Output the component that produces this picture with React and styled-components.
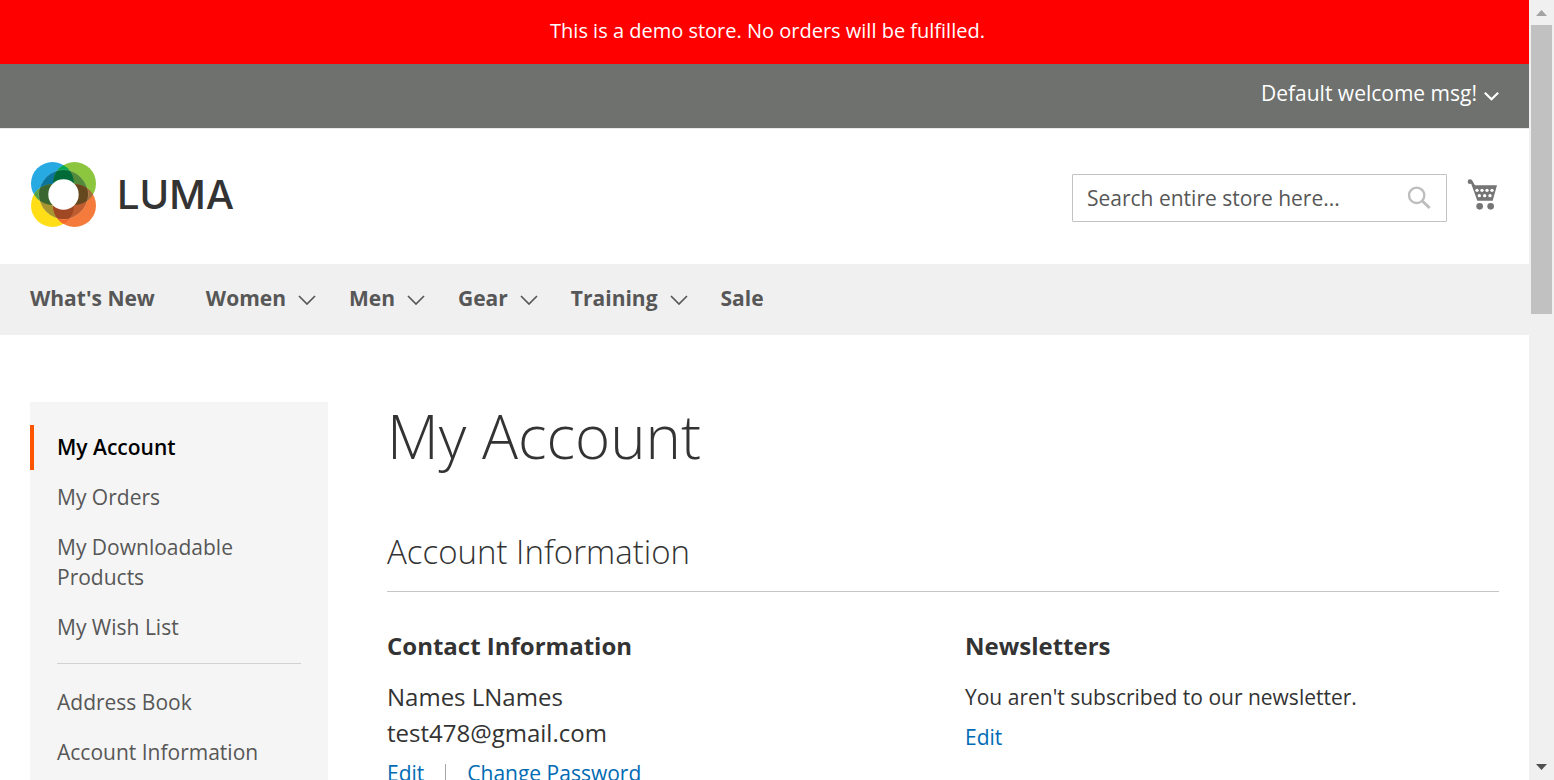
import React from "react";
import styled, { createGlobalStyle, css } from "styled-components";

const GlobalStyle = createGlobalStyle`
  *, *::before, *::after { box-sizing: border-box; }
  body {
    margin: 0;
    background: #fff;
    color: #333;
    font-family: "Open Sans", "Noto Sans", sans-serif;
    font-size: 21px;
    line-height: 30px;
  }
  h1, h2, h3, p, ul { margin: 0; padding: 0; }
  ul { list-style: none; }
  a { color: #006bb4; text-decoration: none; }
  button, input { font: inherit; color: inherit; }
`;

const Shell = styled.div`
  display: flex;
  height: 100vh;
`;

const Page = styled.div`
  flex: 1;
  min-width: 0;
  overflow: hidden auto;
  scrollbar-width: none;
`;

const ScrollRail = styled.div`
  display: flex;
  flex-direction: column;
  align-items: center;
  width: 25px;
  background: #f0f0f0;
`;

const ScrollArrow = styled.svg`
  display: block;
  width: 25px;
  height: 25px;
  fill: ${(p) => p.$color};
`;

const ScrollTrack = styled.div`
  flex: 1;
  width: 21px;
`;

const ScrollThumb = styled.div`
  height: 289px;
  background: #c1c1c1;
`;

const Notice = styled.p`
  padding: 16px 24px 18px 30px;
  background: #f00;
  color: #fff;
  font-size: 20px;
  text-align: center;
`;

const Panel = styled.div`
  display: flex;
  justify-content: flex-end;
  height: 64px;
  padding: 14px 30px 0;
  background: #6e716e;
  color: #fff;
`;

const WelcomeButton = styled.button`
  display: flex;
  align-items: center;
  gap: 7px;
  height: 30px;
  padding: 0;
  border: 0;
  background: none;
  color: #fff;
`;

const Chevron = styled.svg`
  flex: none;
  width: ${(p) => p.$size}px;
  height: 10px;
  margin-top: ${(p) => p.$drop}px;
  fill: none;
  stroke: currentColor;
  stroke-width: ${(p) => p.$weight};
`;

const Header = styled.header`
  display: flex;
  align-items: flex-start;
  height: 136px;
  padding: 33px 30px 0;
  border-top: 1px solid #e8e8e8;
`;

const Logo = styled.a`
  display: flex;
  align-items: center;
  gap: 20px;
  margin-right: auto;
  color: #333;
`;

const LogoMark = styled.svg`
  display: block;
  width: 67px;
  height: 66px;
`;

const LogoWord = styled.span`
  font-family: Inter, "Open Sans", sans-serif;
  font-size: 40px;
  font-weight: 500;
  line-height: 64px;
`;

const SearchForm = styled.form`
  display: flex;
  align-items: center;
  width: 375px;
  height: 48px;
  margin: 12px 20px 0 0;
  border: 1px solid #c2c2c2;
  border-radius: 1px;
`;

const SearchInput = styled.input`
  flex: 1;
  min-width: 0;
  height: 46px;
  padding: 0 14px;
  border: 0;
  outline: 0;
  background: none;
  &::placeholder { color: #575757; opacity: 1; }
`;

const SearchButton = styled.button`
  padding: 0 15px 0 0;
  border: 0;
  background: none;
  color: #bdbdbd;
`;

const SearchIcon = styled.svg`
  display: block;
  width: 24px;
  height: 24px;
`;

const CartLink = styled.a`
  margin-top: 17px;
  color: #757575;
`;

const CartIcon = styled.svg`
  display: block;
  width: 32px;
  height: 32px;
`;

const Nav = styled.nav`
  padding: 0 30px;
  background: #f0f0f0;
`;

const NavList = styled.ul`
  display: flex;
  gap: 33px;
`;

const NavItem = styled.li`
  padding: 19px ${(p) => (p.$plain ? 18 : 0)}px 22px 0;
`;

const NavLink = styled.a`
  display: flex;
  align-items: center;
  gap: 12px;
  color: #575757;
  font-weight: 700;
`;

const Columns = styled.div`
  display: grid;
  grid-template-columns: 298px minmax(0, 1fr);
  gap: 59px;
  align-items: start;
  padding: 67px 30px 60px;
`;

const Sidebar = styled.aside`
  padding: 23px 0;
  background: #f5f5f5;
`;

const SideList = styled.ul`
  display: flex;
  flex-direction: column;
  gap: 5px;
`;

const SideLink = styled.a`
  display: block;
  padding: 7px 40px 8px 27px;
  color: #575757;
  ${(p) =>
    p.$current &&
    css`
      padding-left: 23px;
      border-left: 4px solid #ff5501;
      color: #000;
      font-weight: 600;
    `}
`;

const SideDivider = styled.li`
  height: 1px;
  margin: 8px 27px 11px;
  background: #d1d1d1;
`;

const Title = styled.h1`
  font-size: 60px;
  font-weight: 300;
  line-height: 68px;
`;

const SectionTitle = styled.h2`
  margin-top: 59px;
  padding: 0 0 16px;
  border-bottom: 1px solid #c6c6c6;
  font-size: 33px;
  font-weight: 300;
  line-height: 46px;
`;

const Boxes = styled.div`
  display: grid;
  grid-template-columns: 1fr 1fr;
  gap: 44px;
  padding-top: 36px;
`;

const BoxTitle = styled.h3`
  margin-bottom: 15px;
  font-size: 24px;
  font-weight: 700;
  line-height: 36px;
`;

const BoxText = styled.p`
  font-size: ${(p) => (p.$large ? 24 : 21)}px;
  line-height: 36px;
`;

const BoxActions = styled.div`
  display: flex;
  align-items: center;
  gap: 21px;
  margin-top: 7px;
`;

const ActionRule = styled.span`
  width: 1px;
  height: 18px;
  background: #a6a6a6;
`;

function ChevronIcon({ size = 18, drop = 4, weight = 1.7 }) {
  return (
    <Chevron $size={size} $drop={drop} $weight={weight} viewBox="0 0 18 10" aria-hidden="true">
      <path d="M1 1 L9 9 L17 1" />
    </Chevron>
  );
}

function LumaMark() {
  return (
    <LogoMark viewBox="0 0 67 66" aria-hidden="true">
      <defs>
        <clipPath id="nw"><circle cx="22.5" cy="21.5" r="21.5" /></clipPath>
        <clipPath id="ne"><circle cx="44.5" cy="21.5" r="21.5" /></clipPath>
        <clipPath id="sw"><circle cx="22.5" cy="43.5" r="21.5" /></clipPath>
        <clipPath id="se"><circle cx="44.5" cy="43.5" r="21.5" /></clipPath>
      </defs>
      <circle cx="22.5" cy="21.5" r="21.5" fill="#27a9e1" />
      <circle cx="44.5" cy="21.5" r="21.5" fill="#8cc63f" />
      <circle cx="22.5" cy="43.5" r="21.5" fill="#ffde17" />
      <circle cx="44.5" cy="43.5" r="21.5" fill="#f47b3c" />
      <circle cx="44.5" cy="21.5" r="21.5" fill="#00a651" clipPath="url(#nw)" />
      <circle cx="22.5" cy="43.5" r="21.5" fill="#52a14a" clipPath="url(#nw)" />
      <circle cx="44.5" cy="43.5" r="21.5" fill="#a0703a" clipPath="url(#ne)" />
      <circle cx="44.5" cy="43.5" r="21.5" fill="#f26a2c" clipPath="url(#sw)" />
      <g stroke="#fff" strokeOpacity=".3" strokeWidth=".5">
        <circle cx="33.5" cy="32.5" r="24.5" fill="#0b759c" clipPath="url(#nw)" />
        <circle cx="33.5" cy="32.5" r="24.5" fill="#568a3b" clipPath="url(#ne)" />
        <circle cx="33.5" cy="32.5" r="24.5" fill="#a89430" clipPath="url(#sw)" />
        <circle cx="33.5" cy="32.5" r="24.5" fill="#bf5c30" clipPath="url(#se)" />
      </g>
      <g clipPath="url(#nw)">
        <g clipPath="url(#ne)"><circle cx="33.5" cy="32.5" r="24.5" fill="#006b38" /></g>
        <g clipPath="url(#sw)"><circle cx="33.5" cy="32.5" r="24.5" fill="#3a6730" /></g>
      </g>
      <g clipPath="url(#se)">
        <g clipPath="url(#ne)"><circle cx="33.5" cy="32.5" r="24.5" fill="#66481f" /></g>
        <g clipPath="url(#sw)"><circle cx="33.5" cy="32.5" r="24.5" fill="#a04824" /></g>
      </g>
      <circle cx="33.5" cy="32.5" r="15.2" fill="#fff" />
    </LogoMark>
  );
}

const navItems = [
  { label: "What's New" },
  { label: "Women", menu: true },
  { label: "Men", menu: true },
  { label: "Gear", menu: true },
  { label: "Training", menu: true },
  { label: "Sale" },
];

const sideItems = [
  { label: "My Account", current: true },
  { label: "My Orders" },
  { label: "My Downloadable Products" },
  { label: "My Wish List" },
  { divider: true },
  { label: "Address Book" },
  { label: "Account Information" },
];

export default function App() {
  return (
    <>
      <GlobalStyle />
      <Shell>
        <Page>
          <Notice>This is a demo store. No orders will be fulfilled.</Notice>
          <Panel>
            <WelcomeButton type="button">
              Default welcome msg!
              <ChevronIcon size={15} drop={5} weight={2.6} />
            </WelcomeButton>
          </Panel>
          <Header>
            <Logo href="#">
              <LumaMark />
              <LogoWord>LUMA</LogoWord>
            </Logo>
            <SearchForm role="search">
              <SearchInput type="text" aria-label="Search" placeholder="Search entire store here..." />
              <SearchButton type="submit" aria-label="Submit search">
                <SearchIcon viewBox="0 0 72 72" fill="none" stroke="currentColor" strokeWidth="7">
                  <circle cx="29" cy="28" r="23" />
                  <path d="M46 45 L68 66" strokeWidth="9" />
                </SearchIcon>
              </SearchButton>
            </SearchForm>
            <CartLink href="#" aria-label="My Cart">
              <CartIcon viewBox="0 0 96 96" fill="currentColor">
                <circle cx="9" cy="8" r="7" />
                <path d="M6 10 L15 4 L24 19 L90 19 L77 65 L31 65 L12 13 Z" />
                <g fill="#fff">
                  <circle cx="30" cy="34" r="5" />
                  <circle cx="45" cy="34" r="5" />
                  <circle cx="60" cy="34" r="5" />
                  <circle cx="75" cy="34" r="5" />
                  <circle cx="37" cy="50" r="5" />
                  <circle cx="53" cy="50" r="5" />
                  <circle cx="69" cy="50" r="5" />
                </g>
                <circle cx="38" cy="82" r="10" />
                <circle cx="71" cy="82" r="10" />
              </CartIcon>
            </CartLink>
          </Header>
          <Nav aria-label="Store">
            <NavList>
              {navItems.map((item) => (
                <NavItem key={item.label} $plain={!item.menu}>
                  <NavLink href="#">
                    {item.label}
                    {item.menu && <ChevronIcon />}
                  </NavLink>
                </NavItem>
              ))}
            </NavList>
          </Nav>
          <Columns>
            <Sidebar>
              <SideList>
                {sideItems.map((item) =>
                  item.divider ? (
                    <SideDivider key="divider" role="separator" />
                  ) : (
                    <li key={item.label}>
                      <SideLink href="#" $current={item.current}>{item.label}</SideLink>
                    </li>
                  )
                )}
              </SideList>
            </Sidebar>
            <main>
              <Title>My Account</Title>
              <SectionTitle>Account Information</SectionTitle>
              <Boxes>
                <section>
                  <BoxTitle>Contact Information</BoxTitle>
                  <BoxText $large>Names LNames</BoxText>
                  <BoxText $large>test478@gmail.com</BoxText>
                  <BoxActions>
                    <a href="#">Edit</a>
                    <ActionRule />
                    <a href="#">Change Password</a>
                  </BoxActions>
                </section>
                <section>
                  <BoxTitle>Newsletters</BoxTitle>
                  <BoxText>You aren't subscribed to our newsletter.</BoxText>
                  <BoxActions>
                    <a href="#">Edit</a>
                  </BoxActions>
                </section>
              </Boxes>
            </main>
          </Columns>
        </Page>
        <ScrollRail aria-hidden="true">
          <ScrollArrow $color="#a3a3a3" viewBox="0 0 25 25"><path d="M7 16 L12.5 10 L18 16 Z" /></ScrollArrow>
          <ScrollTrack><ScrollThumb /></ScrollTrack>
          <ScrollArrow $color="#505050" viewBox="0 0 25 25"><path d="M7 9 L12.5 15 L18 9 Z" /></ScrollArrow>
        </ScrollRail>
      </Shell>
    </>
  );
}
